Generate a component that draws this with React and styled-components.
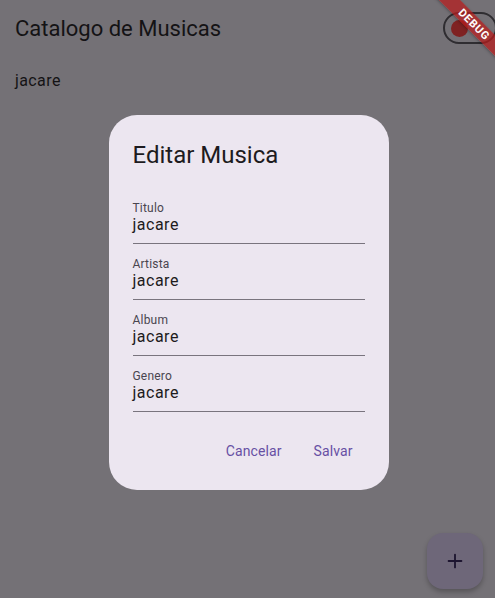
import styled, { createGlobalStyle } from 'styled-components';
import { Plus } from 'lucide-react';

const Global = createGlobalStyle`
  html, body { margin: 0; padding: 0; }
  body {
    font-family: Roboto, "Noto Sans", sans-serif;
    background: #747176;
    overflow: hidden;
  }
`;

const Page = styled.div`
  position: relative;
  width: 495px;
  height: 598px;
  background: #747176;
  overflow: hidden;
`;

const AppBar = styled.header`
  height: 56px;
  display: flex;
  align-items: center;
  justify-content: space-between;
  padding: 0 0 0 15px;
`;

const Title = styled.h1`
  margin: 0;
  font-size: 22px;
  font-weight: 400;
  color: #141315;
  letter-spacing: 0;
`;

// switch (unselected, dimmed by scrim)
const SwitchTrack = styled.div`
  width: 44px;
  height: 28px;
  border: 2px solid #2f2d31;
  border-radius: 16px;
  margin-right: -2px;
  display: flex;
  align-items: center;
  padding-left: 6px;
`;

const Thumb = styled.span`
  width: 17px;
  height: 17px;
  border-radius: 50%;
  background: #7f2222;
`;

const ListTile = styled.div`
  height: 48px;
  display: flex;
  align-items: center;
  padding-left: 15px;
  font-size: 16px;
  color: #141315;
  letter-spacing: 0.4px;
`;

const Overlay = styled.div`
  position: absolute;
  inset: 0;
  display: flex;
  justify-content: center;
  padding: 115px 0 0 2px;
`;

const Dialog = styled.div`
  width: 280px;
  height: 375px;
  box-sizing: border-box;
  background: #ece6f0;
  border-radius: 28px;
  padding: 24px 24px 0 24px;
  display: flex;
  flex-direction: column;
`;

const DialogTitle = styled.h2`
  margin: 0;
  font-size: 24px;
  font-weight: 400;
  line-height: 32px;
  color: #1d1b20;
`;

const Fields = styled.div`
  margin-top: 25px;
  display: flex;
  flex-direction: column;
  gap: 8px;
`;

const Field = styled.div`
  height: 48px;
  box-sizing: border-box;
  border-bottom: 1px solid #79747e;
  display: flex;
  flex-direction: column;
  justify-content: flex-end;
  padding-bottom: 8px;
`;

const Label = styled.span`
  font-size: 12px;
  line-height: 14px;
  color: #49454f;
  letter-spacing: 0.2px;
`;

const Value = styled.span`
  font-size: 16px;
  line-height: 20px;
  color: #1d1b20;
  letter-spacing: 0.5px;
`;

const Actions = styled.div`
  margin-top: 21px;
  display: flex;
  justify-content: flex-end;
  gap: 8px;
`;

const TextButton = styled.button`
  border: none;
  background: none;
  font-family: inherit;
  font-size: 14px;
  font-weight: 400;
  color: #6750a4;
  padding: 10px 12px;
  letter-spacing: 0.1px;
`;

const Fab = styled.div`
  position: absolute;
  right: 12px;
  bottom: 9px;
  width: 56px;
  height: 56px;
  border-radius: 16px;
  background: #6e6779;
  display: flex;
  align-items: center;
  justify-content: center;
  color: #1d1530;
  box-shadow: 0 3px 5px rgba(0, 0, 0, 0.25);
`;

const Banner = styled.div`
  position: absolute;
  top: 17px;
  right: -39px;
  width: 120px;
  height: 15px;
  transform: rotate(45deg);
  background: rgba(183, 28, 28, 0.72);
  color: #fff;
  font-size: 11px;
  font-weight: 700;
  line-height: 15px;
  text-align: center;
  letter-spacing: 0.8px;
  box-shadow: 0 1px 3px rgba(0, 0, 0, 0.3);
`;

const fields = [
  { label: 'Titulo', value: 'jacare' },
  { label: 'Artista', value: 'jacare' },
  { label: 'Album', value: 'jacare' },
  { label: 'Genero', value: 'jacare' },
];

export default function App() {
  return (
    <Page>
      <Global />
      <AppBar>
        <Title>Catalogo de Musicas</Title>
        <SwitchTrack>
          <Thumb />
        </SwitchTrack>
      </AppBar>
      <ListTile>jacare</ListTile>

      <Fab>
        <Plus size={22} strokeWidth={2} />
      </Fab>

      <Overlay>
        <Dialog>
          <DialogTitle>Editar Musica</DialogTitle>
          <Fields>
            {fields.map((f) => (
              <Field key={f.label}>
                <Label>{f.label}</Label>
                <Value>{f.value}</Value>
              </Field>
            ))}
          </Fields>
          <Actions>
            <TextButton>Cancelar</TextButton>
            <TextButton>Salvar</TextButton>
          </Actions>
        </Dialog>
      </Overlay>

      <Banner>DEBUG</Banner>
    </Page>
  );
}
